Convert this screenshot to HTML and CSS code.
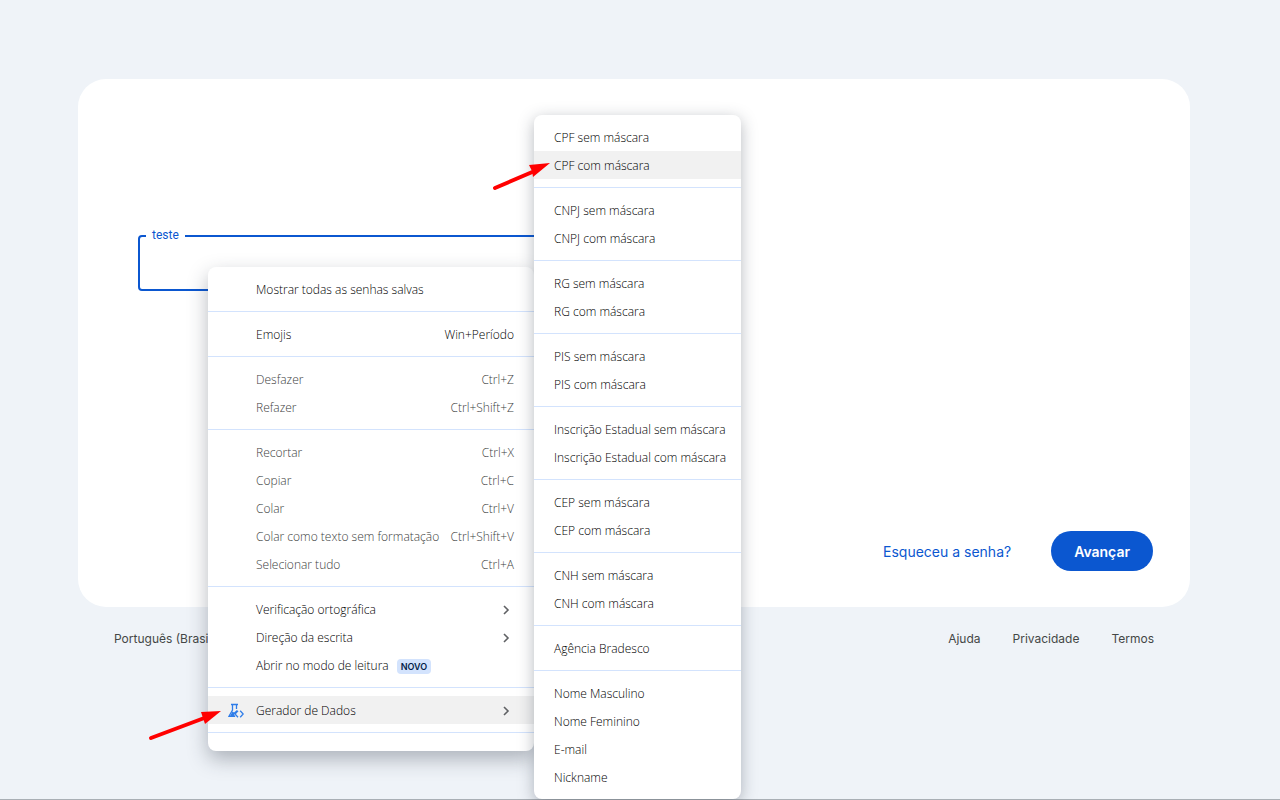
FILE: index.html
```html
<!DOCTYPE html>
<html lang="pt-BR">
<head>
<meta charset="utf-8">
<meta name="viewport" content="width=device-width, initial-scale=1">
<title>Gerador de Dados</title>
<link rel="stylesheet" href="styles.css">
</head>
<body>
<div class="page">
  <main class="card">
    <div class="field">
      <input class="field-input" id="teste" type="text">
      <label class="field-label" for="teste">teste</label>
    </div>
    <div class="actions">
      <a class="forgot" href="#">Esqueceu a senha?</a>
      <button class="next" type="button">Avançar</button>
    </div>
  </main>
  <footer class="footer">
    <button class="language" type="button">Português (Brasil)</button>
    <nav class="links">
      <a href="#">Ajuda</a>
      <a href="#">Privacidade</a>
      <a href="#">Termos</a>
    </nav>
  </footer>
</div>

<div class="menu context-menu" role="menu">
  <button class="item" role="menuitem">Mostrar todas as senhas salvas</button>
  <hr class="separator">
  <button class="item" role="menuitem">Emojis<span class="shortcut">Win+Período</span></button>
  <hr class="separator">
  <button class="item muted" role="menuitem">Desfazer<span class="shortcut">Ctrl+Z</span></button>
  <button class="item muted" role="menuitem">Refazer<span class="shortcut">Ctrl+Shift+Z</span></button>
  <hr class="separator">
  <button class="item muted" role="menuitem">Recortar<span class="shortcut">Ctrl+X</span></button>
  <button class="item muted" role="menuitem">Copiar<span class="shortcut">Ctrl+C</span></button>
  <button class="item muted" role="menuitem">Colar<span class="shortcut">Ctrl+V</span></button>
  <button class="item muted" role="menuitem">Colar como texto sem formatação<span class="shortcut">Ctrl+Shift+V</span></button>
  <button class="item muted" role="menuitem">Selecionar tudo<span class="shortcut">Ctrl+A</span></button>
  <hr class="separator">
  <button class="item" role="menuitem">Verificação ortográfica<svg class="chevron" viewBox="0 0 8 10"><path d="M2 1l4 4-4 4"/></svg></button>
  <button class="item" role="menuitem">Direção da escrita<svg class="chevron" viewBox="0 0 8 10"><path d="M2 1l4 4-4 4"/></svg></button>
  <button class="item" role="menuitem">Abrir no modo de leitura<span class="badge">NOVO</span></button>
  <hr class="separator">
  <button class="item selected with-icon" role="menuitem"><svg class="flask" viewBox="0 0 16 16"><path d="M3 1.500h7M4.500 2v5L1 13.300h6M8.500 2v4"/><path class="fill" d="M4.500 8.500l1.500 1 3-2.500v2L6 11.500l1.500 2.500H1.500z"/><path d="M10 7.800L7 11l3 3.200M12.200 7.800l3 3.200-3 3.200"/></svg>Gerador de Dados<svg class="chevron" viewBox="0 0 8 10"><path d="M2 1l4 4-4 4"/></svg></button>
  <hr class="separator">
</div>

<div class="menu submenu" role="menu">
  <button class="item" role="menuitem">CPF sem máscara</button>
  <button class="item selected" role="menuitem">CPF com máscara</button>
  <hr class="separator">
  <button class="item" role="menuitem">CNPJ sem máscara</button>
  <button class="item" role="menuitem">CNPJ com máscara</button>
  <hr class="separator">
  <button class="item" role="menuitem">RG sem máscara</button>
  <button class="item" role="menuitem">RG com máscara</button>
  <hr class="separator">
  <button class="item" role="menuitem">PIS sem máscara</button>
  <button class="item" role="menuitem">PIS com máscara</button>
  <hr class="separator">
  <button class="item" role="menuitem">Inscrição Estadual sem máscara</button>
  <button class="item" role="menuitem">Inscrição Estadual com máscara</button>
  <hr class="separator">
  <button class="item" role="menuitem">CEP sem máscara</button>
  <button class="item" role="menuitem">CEP com máscara</button>
  <hr class="separator">
  <button class="item" role="menuitem">CNH sem máscara</button>
  <button class="item" role="menuitem">CNH com máscara</button>
  <hr class="separator">
  <button class="item" role="menuitem">Agência Bradesco</button>
  <hr class="separator">
  <button class="item" role="menuitem">Nome Masculino</button>
  <button class="item" role="menuitem">Nome Feminino</button>
  <button class="item" role="menuitem">E-mail</button>
  <button class="item" role="menuitem">Nickname</button>
</div>

<svg class="arrow arrow-top" viewBox="0 0 60 30"><path class="shaft" d="M4 26L46 8"/><path class="head" d="M59 1L38 3l3 6 1 6z"/></svg>
<svg class="arrow arrow-bottom" viewBox="0 0 74 32"><path class="shaft" d="M4 29L60 8"/><path class="head" d="M74 2L54 3l2 6 2 6z"/></svg>
</body>
</html>
```
FILE: styles.css
```css
* { box-sizing: border-box; }

body {
  margin: 0;
  background: #eff3f8;
  font-family: Roboto, "Liberation Sans", sans-serif;
}

button { font: inherit; color: inherit; border: 0; background: none; padding: 0; }
a { color: inherit; text-decoration: none; }

.page {
  min-height: 100vh;
  padding: 79px 90px 0 78px;
  border-bottom: 1px solid #a9afb5;
}

.card {
  display: flex;
  flex-direction: column;
  justify-content: space-between;
  min-height: 528px;
  padding: 156px 37px 36px 60px;
  border-radius: 28px;
  background: #fff;
}

.field { position: relative; width: 46%; }

.field-input {
  display: block;
  width: 100%;
  height: 56px;
  padding: 0 14px;
  border: 2px solid #0b57d0;
  border-radius: 4px;
  outline: 0;
  font-size: 16px;
}

.field-label {
  position: absolute;
  top: -8px;
  left: 8px;
  padding: 0 6px;
  background: #fff;
  color: #0b57d0;
  font-size: 12px;
  line-height: 16px;
}

.actions {
  display: flex;
  justify-content: flex-end;
  align-items: center;
  gap: 40px;
  font-family: Inter, sans-serif;
  font-size: 14px;
}

.forgot { color: #0b57d0; }

.next {
  height: 40px;
  padding: 0 23px;
  border-radius: 20px;
  background: #0b57d0;
  color: #fff;
  font-weight: 600;
}

.footer {
  display: flex;
  justify-content: space-between;
  padding: 24px 36px;
  color: #444746;
  font-size: 12px;
  line-height: 16px;
  font-family: Inter, sans-serif;
}

.links { display: flex; gap: 32px; }

.menu {
  position: absolute;
  padding: 8px 0;
  border-radius: 8px;
  background: #fff;
  color: #000;
  font-family: "Open Sans", "Noto Sans", sans-serif;
  font-size: 12px;
  font-weight: 300;
  line-height: 16px;
}

.context-menu {
  top: 267px;
  left: 208px;
  width: 326px;
  padding-bottom: 10px;
  box-shadow: 0 8px 20px rgba(40, 50, 65, .34);
}

.submenu {
  top: 115px;
  left: 534px;
  width: 207px;
  box-shadow: 0 4px 16px rgba(40, 50, 65, .34);
}

.item {
  display: flex;
  align-items: center;
  width: 100%;
  height: 28px;
  padding: 2px 20px 0;
  text-align: left;
  white-space: nowrap;
}

.context-menu .item { padding-left: 48px; }
.context-menu .with-icon { padding-left: 20px; }
.context-menu .muted { color: #3c3e40; }
.selected { background: #f1f1f1; }
.shortcut { margin-left: auto; }

.separator {
  height: 1px;
  margin: 8px 0;
  border: 0;
  background: #d3e3fd;
}

.badge {
  margin-left: 8px;
  padding: 0 4px;
  border-radius: 4px;
  background: #d3e3fd;
  color: #041e49;
  font: 600 9px/15px Inter, sans-serif;
}

.chevron {
  width: 8px;
  height: 10px;
  margin-left: auto;
  margin-right: 4px;
  fill: none;
  stroke: #5f6164;
  stroke-width: 1.6;
}

.flask {
  width: 16px;
  height: 16px;
  margin-right: 12px;
  fill: none;
  stroke: #2f7de9;
  stroke-width: 1.3;
}

.flask .fill { fill: #2f7de9; stroke: none; }

.arrow { position: absolute; pointer-events: none; }
.arrow-top { top: 162px; left: 491px; width: 60px; height: 30px; }
.arrow-bottom { top: 709px; left: 147px; width: 74px; height: 32px; }
.shaft { fill: none; stroke: #f00; stroke-width: 4; stroke-linecap: round; }
.head { fill: #f00; }
```
